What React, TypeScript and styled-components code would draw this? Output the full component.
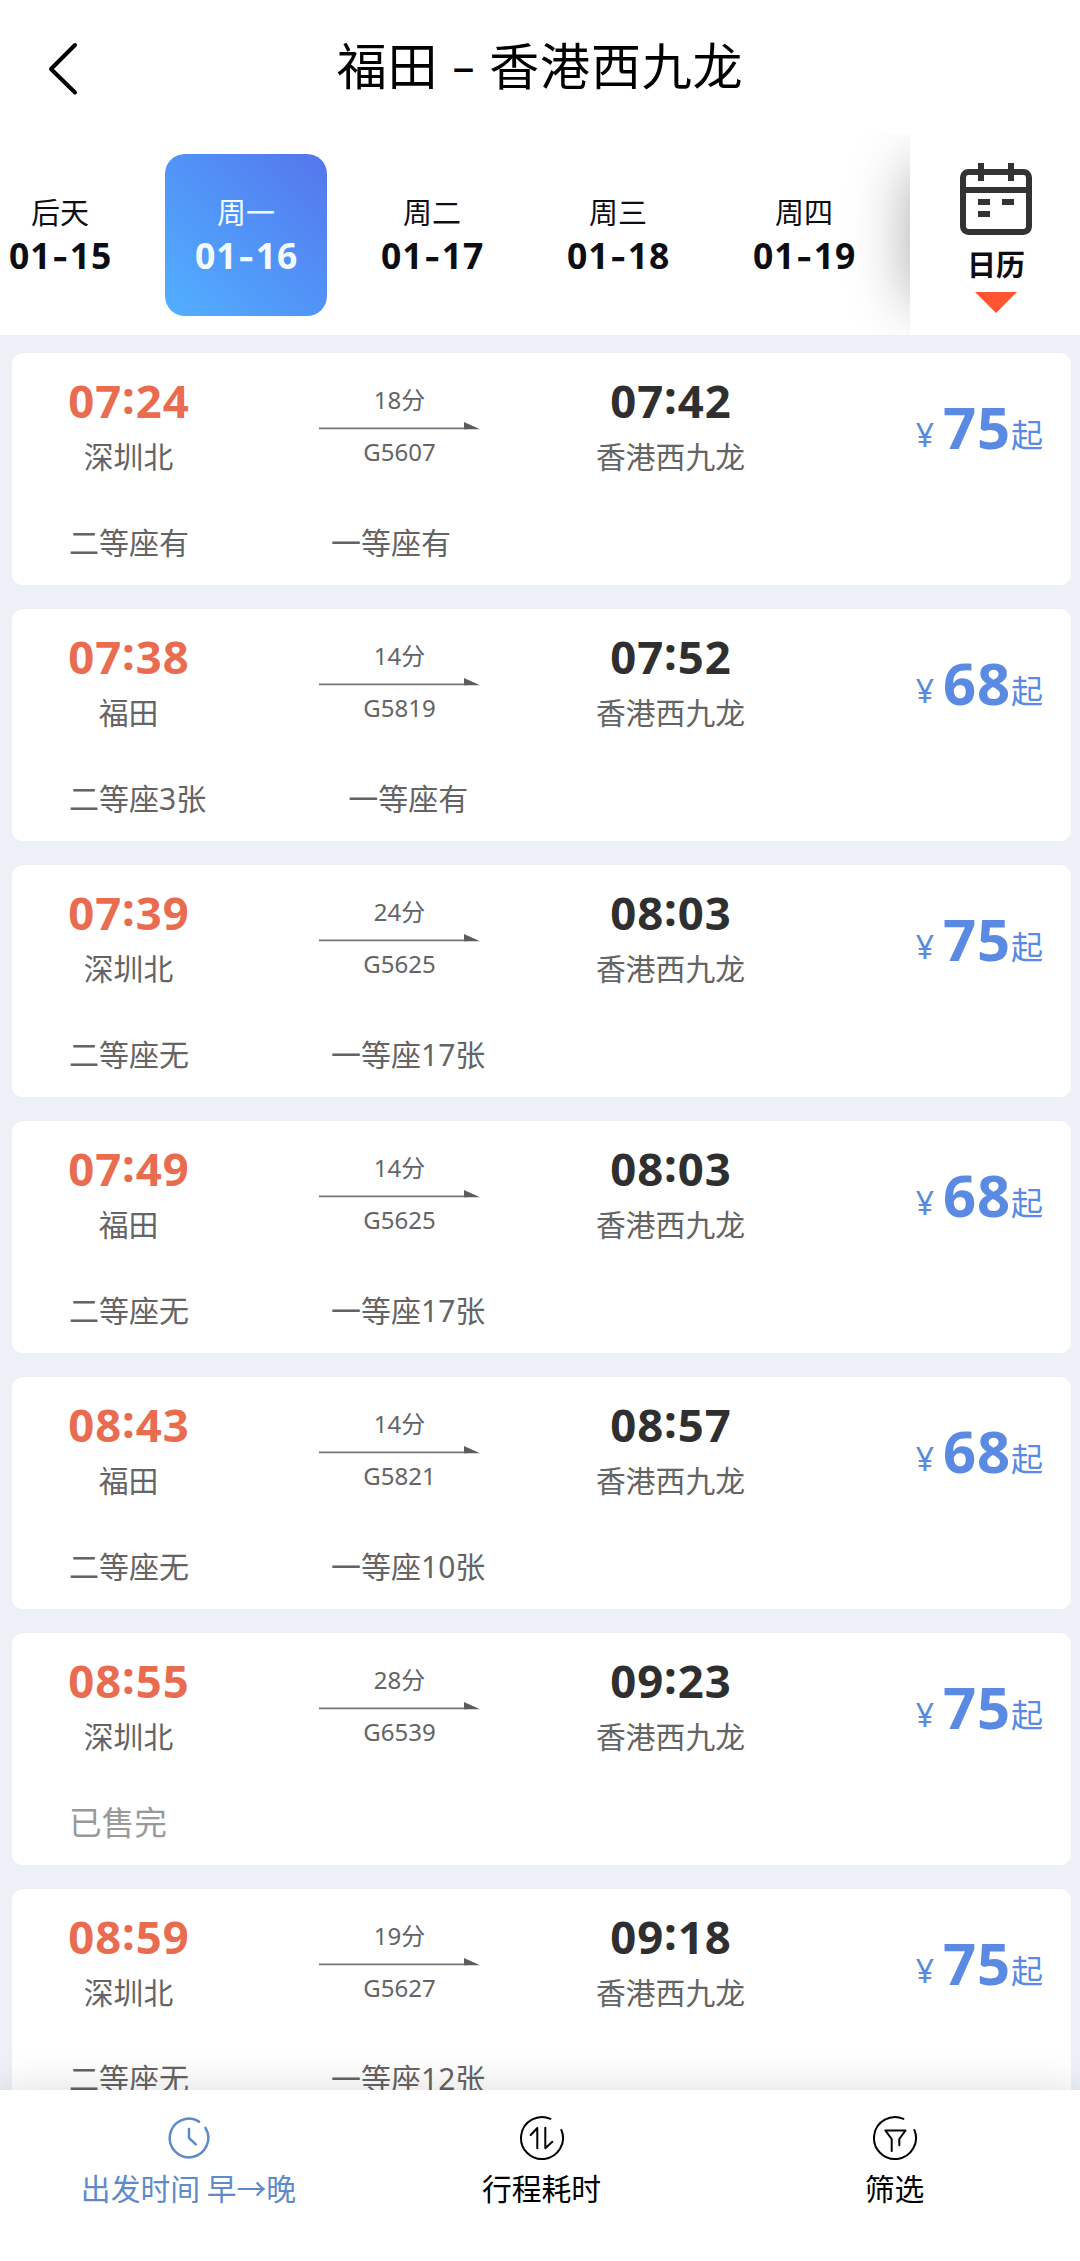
import React from 'react';
import styled, { createGlobalStyle } from 'styled-components';

const FONT = '"Noto Sans", "Noto Sans CJK SC", sans-serif';

const GlobalStyle = createGlobalStyle`
  * { box-sizing: border-box; }
  html, body { margin: 0; padding: 0; }
  body { font-family: ${FONT}; background: #edf0f7; overflow: hidden; }
`;

const Page = styled.div`
  display: flex;
  flex-direction: column;
  width: 1080px;
  height: 2261px;
  overflow: hidden;
  background: #edf0f7;
`;

const Header = styled.header`
  display: grid;
  grid-template-columns: 120px 1fr 120px;
  align-items: center;
  height: 134px;
  flex: none;
  background: #fff;
`;

const BackButton = styled.button`
  display: flex;
  width: 120px;
  height: 134px;
  padding: 40px 0 0 46px;
  border: 0;
  background: none;
`;

const Title = styled.h1`
  display: flex;
  justify-content: center;
  margin: 0;
  padding-bottom: 6px;
  font-size: 50px;
  line-height: 60px;
  font-weight: 400;
  font-family: "Noto Sans CJK SC", sans-serif;
  letter-spacing: 0.8px;
  color: #000;
  white-space: pre;
`;

const Dash = styled.span`
  width: 51px;
  padding-top: 2px;
  text-align: center;
  font-family: "Noto Sans", sans-serif;
  font-size: 44px;
  font-weight: 400;
`;

const DateBar = styled.nav`
  display: flex;
  height: 201px;
  flex: none;
  background: #fff;
`;

const DateScroller = styled.div`
  display: flex;
  align-items: flex-start;
  width: 910px;
  padding-top: 20px;
  overflow: hidden;
`;

const DateTrack = styled.div`
  display: flex;
  gap: 24px;
  margin-left: -21px;
`;

const DateTile = styled.div<{ $active?: boolean }>`
  display: flex;
  flex-direction: column;
  align-items: center;
  flex: none;
  width: 162px;
  height: 162px;
  padding-top: 39px;
  border-radius: 20px;
  color: ${p => (p.$active ? '#f4fbff' : '#0d0d14')};
  background: ${p => (p.$active ? 'linear-gradient(45deg, #52b0ff 0%, #5196f8 45%, #5476ec 100%)' : 'transparent')};
`;

const WeekDay = styled.span`
  font-size: 29px;
  line-height: 40px;
`;

const DayDate = styled.span`
  font-size: 35.5px;
  line-height: 46px;
  font-weight: 700;
  letter-spacing: 1.1px;
  margin: -1px -1.5px 0 0;
`;

const Hyphen = styled.span`
  font-family: Inter, sans-serif;
  font-size: 36px;
  line-height: 0;
  vertical-align: -1px;
`;

const CalendarButton = styled.div`
  display: flex;
  flex-direction: column;
  align-items: center;
  width: 170px;
  padding: 29px 0 0 2px;
  background: #fff;
  box-shadow: -34px 0 60px -34px rgba(0, 0, 0, 0.34);
  clip-path: inset(0 0 0 -90px);
`;

const CalendarLabel = styled.span`
  margin-top: 6px;
  font-size: 29px;
  line-height: 44px;
  font-weight: 600;
  font-family: "Noto Sans CJK SC", sans-serif;
  color: #0d0d14;
`;

const Triangle = styled.span`
  margin-top: 7px;
  border: 21px solid transparent;
  border-top-color: #ff5533;
  border-bottom: 0;
`;

const List = styled.main`
  display: flex;
  flex-direction: column;
  gap: 24px;
  flex: 1;
  min-height: 0;
  padding: 18px 9px 0 12px;
  overflow: hidden;
`;

const Card = styled.article`
  flex: none;
  height: 232px;
  padding: 0 28px 0 26px;
  border-radius: 11px;
  background: #fff;
`;

const TripRow = styled.div`
  display: grid;
  grid-template-columns: 181px 361px 181px 1fr;
  height: 162px;
`;

const Stop = styled.div`
  display: flex;
  flex-direction: column;
  align-items: center;
  padding-top: 17px;
`;

const Time = styled.span<{ $departure?: boolean }>`
  font-size: 45.5px;
  line-height: 60px;
  font-weight: 700;
  letter-spacing: 0.9px;
  margin-right: -0.9px;
  color: ${p => (p.$departure ? '#e96c50' : '#2f2f2f')};
`;

const Colon = styled.span`
  vertical-align: 4px;
  line-height: 0;
`;

const Station = styled.span`
  margin-top: 6px;
  font-size: 29.8px;
  line-height: 42px;
  color: #646464;
`;

const Route = styled.div`
  display: flex;
  flex-direction: column;
  align-items: center;
  padding-top: 29px;
  font-size: 24px;
  line-height: 36px;
  color: #646464;
`;

const Arrow = styled.svg`
  display: block;
  margin: 4px 0 4px;
`;

const Price = styled.div`
  height: 90px;
  padding-top: 34px;
  line-height: 80px;
  text-align: right;
  white-space: nowrap;
  color: #5a8ae2;
`;

const Currency = styled.span`
  font-size: 32px;
  line-height: 0;
  margin-right: 9px;
  vertical-align: 2px;
`;

const Amount = styled.span`
  font-size: 58px;
  font-weight: 700;
  letter-spacing: 0.8px;
`;

const Suffix = styled.span`
  font-size: 32px;
  line-height: 0;
  vertical-align: 2px;
`;

const Seats = styled.div`
  display: flex;
  gap: 142px;
  margin-top: 7px;
  padding-left: 31px;
  font-size: 30px;
  line-height: 42px;
  color: #646464;
`;

const SoldOut = styled.span`
  font-size: 32.7px;
  color: #999;
`;

const TabBar = styled.footer`
  display: grid;
  grid-template-columns: repeat(3, 1fr);
  flex: none;
  height: 171px;
  padding: 24px 9px 0 12px;
  background: #fff;
  box-shadow: 0 0 40px rgba(0, 0, 0, 0.14);
  z-index: 1;
`;

const Tab = styled.div<{ $active?: boolean }>`
  display: flex;
  flex-direction: column;
  align-items: center;
  gap: 4px;
  font-size: 29.8px;
  line-height: 42px;
  font-family: "Noto Sans CJK SC", sans-serif;
  color: ${p => (p.$active ? '#5f8ac9' : '#000')};
`;

const TabIcon = styled.svg`
  width: 48px;
  height: 48px;
  fill: none;
  stroke: currentColor;
  stroke-linecap: round;
  stroke-linejoin: round;
`;

interface Train {
  depart: string;
  from: string;
  duration: string;
  number: string;
  arrive: string;
  price: number;
  seats: string[];
}

const trains: Train[] = [
  { depart: '07:24', from: '深圳北', duration: '18分', number: 'G5607', arrive: '07:42', price: 75, seats: ['二等座有', '一等座有'] },
  { depart: '07:38', from: '福田', duration: '14分', number: 'G5819', arrive: '07:52', price: 68, seats: ['二等座3张', '一等座有'] },
  { depart: '07:39', from: '深圳北', duration: '24分', number: 'G5625', arrive: '08:03', price: 75, seats: ['二等座无', '一等座17张'] },
  { depart: '07:49', from: '福田', duration: '14分', number: 'G5625', arrive: '08:03', price: 68, seats: ['二等座无', '一等座17张'] },
  { depart: '08:43', from: '福田', duration: '14分', number: 'G5821', arrive: '08:57', price: 68, seats: ['二等座无', '一等座10张'] },
  { depart: '08:55', from: '深圳北', duration: '28分', number: 'G6539', arrive: '09:23', price: 75, seats: [] },
  { depart: '08:59', from: '深圳北', duration: '19分', number: 'G5627', arrive: '09:18', price: 75, seats: ['二等座无', '一等座12张'] },
];

const days = [
  ['后天', '01', '15'],
  ['周一', '01', '16'],
  ['周二', '01', '17'],
  ['周三', '01', '18'],
  ['周四', '01', '19'],
];

const ClockTime = ({ value, departure }: { value: string; departure?: boolean }) => {
  const [hours, minutes] = value.split(':');
  return (
    <Time $departure={departure}>
      {hours}<Colon>:</Colon>{minutes}
    </Time>
  );
};

const CalendarIcon = () => (
  <svg width="72" height="72" viewBox="0 0 24 24" fill="none" stroke="#333" strokeWidth="2">
    <rect x="1" y="3" width="22" height="20" rx="1.8" />
    <path d="M1 9H23M7 0V6M17 0V6M6 13H10M14 13H18M6 17H10" />
  </svg>
);

const TrainCard = ({ train }: { train: Train }) => (
  <Card>
    <TripRow>
      <Stop>
        <ClockTime value={train.depart} departure />
        <Station>{train.from}</Station>
      </Stop>
      <Route>
        <span>{train.duration}</span>
        <Arrow width="161" height="8" viewBox="0 0 161 8">
          <path d="M0 6.4H150" stroke="#747474" strokeWidth="1.8" />
          <path d="M145 0L161 7.3H145Z" fill="#5c5c5c" />
        </Arrow>
        <span>{train.number}</span>
      </Route>
      <Stop>
        <ClockTime value={train.arrive} />
        <Station>香港西九龙</Station>
      </Stop>
      <Price>
        <Currency>¥</Currency>
        <Amount>{train.price}</Amount>
        <Suffix>起</Suffix>
      </Price>
    </TripRow>
    <Seats>
      {train.seats.length ? train.seats.map(s => <span key={s}>{s}</span>) : <SoldOut>已售完</SoldOut>}
    </Seats>
  </Card>
);

export default function App() {
  return (
    <Page>
      <GlobalStyle />
      <Header>
        <BackButton>
          <svg width="34" height="58" viewBox="0 0 34 58" fill="none" stroke="#000" strokeWidth="4" strokeLinecap="round" strokeLinejoin="round">
            <path d="M29 5L5 29L29 52.5" />
          </svg>
        </BackButton>
        <Title>福田<Dash> – </Dash>香港西九龙</Title>
      </Header>
      <DateBar>
        <DateScroller>
          <DateTrack>
            {days.map(([week, month, day], i) => (
              <DateTile key={day} $active={i === 1}>
                <WeekDay>{week}</WeekDay>
                <DayDate>{month}<Hyphen>-</Hyphen>{day}</DayDate>
              </DateTile>
            ))}
          </DateTrack>
        </DateScroller>
        <CalendarButton>
          <CalendarIcon />
          <CalendarLabel>日历</CalendarLabel>
          <Triangle />
        </CalendarButton>
      </DateBar>
      <List>
        {trains.map(t => <TrainCard key={t.depart} train={t} />)}
      </List>
      <TabBar>
        <Tab $active>
          <TabIcon viewBox="-24 -24 48 48" strokeWidth="2.5">
            <path d="M10.1 -16.4A19.3 19.3 0 1 0 16.4 -10.1M0 -9V0L6.8 6.4" />
          </TabIcon>
          <span>出发时间 早→晚</span>
        </Tab>
        <Tab>
          <TabIcon viewBox="-24 -24 48 48" strokeWidth="2">
            <path d="M8.4 -19.2A21 21 0 1 0 19.4 -8M-11.3 -3L-4.7 -10V10.3M3.3 -10.3V10.3L10.3 3.7" />
          </TabIcon>
          <span>行程耗时</span>
        </Tab>
        <Tab>
          <TabIcon viewBox="-24 -24 48 48" strokeWidth="2">
            <path d="M8.4 -19.2A21 21 0 1 0 19.4 -8M-3.3 13V1L-9.7 -7.5H10.5L4.3 1V7.3" />
          </TabIcon>
          <span>筛选</span>
        </Tab>
      </TabBar>
    </Page>
  );
}
